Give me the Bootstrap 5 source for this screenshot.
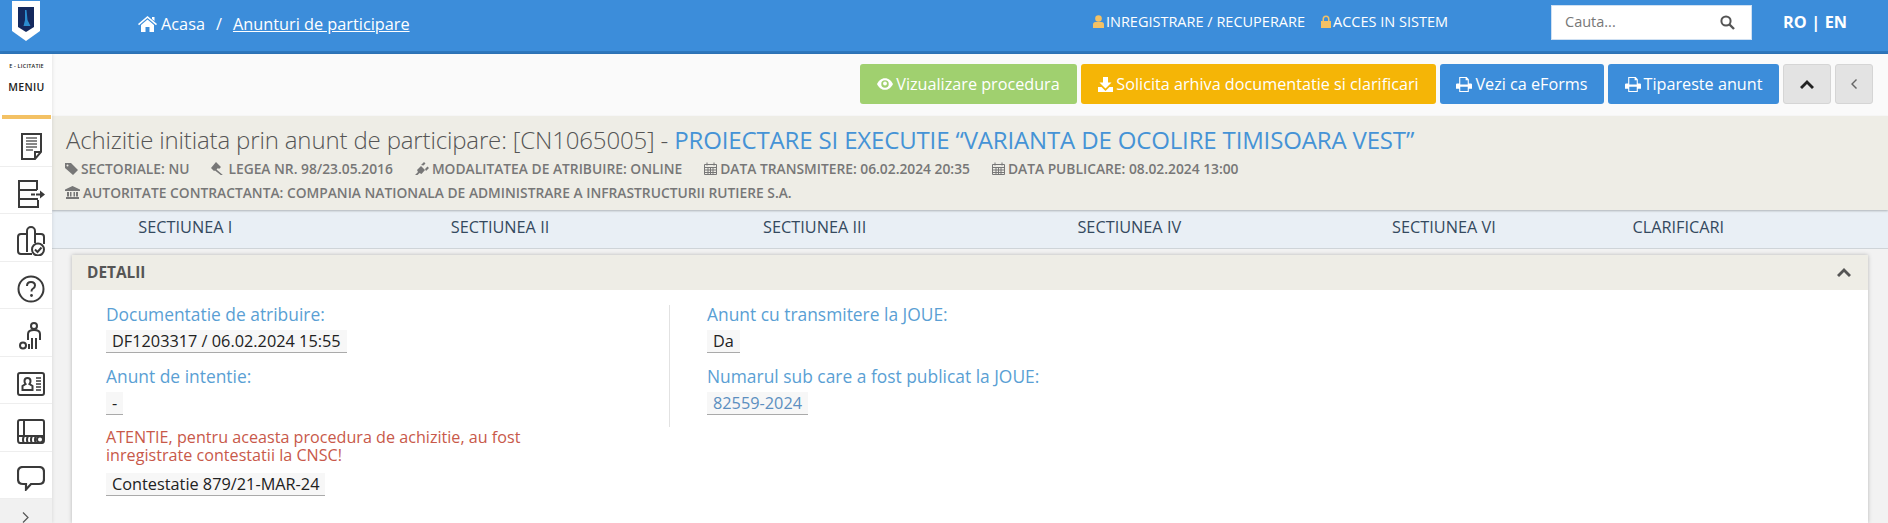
<!DOCTYPE html>
<html lang="ro">
<head>
<meta charset="utf-8">
<title>Anunturi de participare</title>
<link rel="stylesheet" href="https://cdn.jsdelivr.net/npm/bootstrap@5.3.0/dist/css/bootstrap.min.css">
<style>
html,body{height:523px;overflow:hidden}
body{font-family:"Open Sans",sans-serif;background:#fff;color:#333;width:1888px}
svg{fill:currentColor;flex:none}
.topbar{height:54px;background:#3c8dda;border-bottom:3px solid #2e77bd;color:#fff;padding-bottom:7px}
.logo-slot{width:52px;padding-left:12px}
.crumbs{margin-left:86px;margin-top:4px;font-size:16.3px;gap:7px}
.crumbs a{color:#fff}
.auth-links{font-size:14.5px;margin-right:103px;margin-bottom:1px;gap:16px;color:#fff}
.auth-links svg{color:#f3c164;margin-right:2px}
.search-box{width:201px;height:35px;background:#fff;padding:0 16px 0 13px;font-size:14.5px;color:#777;margin-right:31px;border:1px solid #cfe0f2}
.lang{font-size:16.3px;font-weight:700;color:#fff;width:105px;letter-spacing:.1px}
.main-row{height:469px}
.side-col{width:52px;background:#fff;z-index:2;box-shadow:1px 0 3px rgba(0,0,0,.08)}
.side-head{height:65px;text-align:center;color:#222;border-bottom:4px solid #f3c164;margin:0 1px 0 2px}
.side-head .brand{font-size:5.5px;font-weight:600;padding-top:6px;line-height:12px;letter-spacing:.2px}
.side-head .menu{font-size:10.5px;font-weight:600;line-height:16px;margin-top:7px;letter-spacing:.3px}
.side-item{height:47.5px;border-bottom:1px solid #eee;color:#3a3a3a;padding-top:8px;padding-left:9px}
.side-item svg{fill:none;stroke:#3a3a3a;stroke-width:2}
.side-more{height:24px;background:#f1f1f1;color:#555;padding:13px 2px 0 0}
.content-col{min-width:0;background:#f2f2f2}
.toolbar{height:62px;background:#fafafa;padding:10px 15px 0 0;gap:4px;box-shadow:0 1px 3px rgba(0,0,0,.25);position:relative}
.tool-btn{height:40px;font-size:16.2px;color:#fff;border:0;border-radius:3px;padding:0;gap:3px}
.w-viz{width:217px;background:#a0d06f}
.w-sol{width:355px;background:#f5b506}
.w-efo{width:164px;background:#3c8dda}
.w-tip{width:171px;background:#3c8dda}
.w-up{width:48px;background:#e3e3e3;color:#222;border:1px solid #d5d5d5}
.w-left{width:38px;background:#e3e3e3;color:#666;border:1px solid #d5d5d5}
.titlestrip{height:94px;background:#eeede6;padding:8px 0 0 14px;box-shadow:0 1px 2px rgba(0,0,0,.25);position:relative}
.proc-title{font-size:24px;font-weight:300;color:#555;line-height:31px;margin:0 0 2px;white-space:nowrap;letter-spacing:-.15px}
.proc-title span{color:#4593d6;font-weight:400}
.meta-row{font-size:13.8px;font-weight:600;color:#777;line-height:24px;gap:22px;white-space:nowrap;margin-left:-1px}
.meta-row svg{margin-right:3px;vertical-align:-1px}
.tabs-strip{height:39px;background:#e9eff5;border-bottom:1px solid #cfd4d8;overflow:hidden}
.tabs-row{margin-left:-24px;width:1900px}
.tab-cell{width:314.67px;text-align:center;font-size:16.3px;font-weight:500;color:#34495e;line-height:34px}
.tab-last{width:154px}
.panel-box{margin:6px 20px 0;background:#fff;box-shadow:0 0 4px rgba(0,0,0,.25);height:268px}
.panel-head{height:35px;background:#eeede6;padding:0 17px 0 15px;font-size:15.4px;font-weight:700;color:#555}
.panel-body-area{padding:15px 0 0 34px}
.left-pane{width:563px;padding-right:110px}
.right-pane{padding-left:37px;border-left:1px solid #e2e2e2;height:122px}
.fld-label{font-size:17.4px;color:#5a9fd4;line-height:18px;margin:0 0 7px}
.fld-alert{color:#c8594a;font-size:16.15px;margin-top:-1px;margin-bottom:9px}
.fld-value{display:table;font-size:16.3px;line-height:22px;background:#f7f7f7;border-bottom:1px solid #aaa;padding:0 6px;color:#222;margin-bottom:14px}
.fld-link{color:#5c8fc0}
</style>
</head>
<body>
<div class="topbar d-flex align-items-center">
  <div class="logo-slot align-self-start">
    <svg width="28" height="41" viewBox="0 0 28 41"><path fill="#fff" d="M0 1h28v30L14 41 0 31z"/><path fill="#14295e" d="M6 7h16v20l-8 5-8-5z"/><path fill="#2b8ccf" d="M13 10h1.500l1 10 3 6h-7l1.500-6z"/></svg>
  </div>
  <nav class="crumbs d-flex align-items-center">
    <span class="d-flex align-items-center gap-1"><svg width="19" height="16" viewBox="0 0 19 16"><path d="M9.500 0l9.500 8-1 1.200-8.500-7.100L1 9.200 0 8z"/><path d="M3 9l6.500-5.400L16 9v7h-4.500v-5h-4v5H3zM14 1h2.500v4L14 3z"/></svg><span>Acasa</span></span>
    <span class="mx-1">/</span>
    <a href="#">Anunturi de participare</a>
  </nav>
  <div class="auth-links d-flex align-items-center ms-auto">
    <span class="d-flex align-items-center"><svg width="11" height="13" viewBox="0 0 11 13"><circle cx="5.500" cy="3.500" r="3.300"/><path d="M0 13V9.500Q0 7 2.500 7h6Q11 7 11 9.500V13z"/></svg>INREGISTRARE / RECUPERARE</span>
    <span class="d-flex align-items-center"><svg width="10" height="13" viewBox="0 0 10 13"><path d="M0 6h1.500V4a3.500 3.500 0 017 0v2H10v7H0zM3 6h4V4a2 2 0 00-4 0z"/></svg>ACCES IN SISTEM</span>
  </div>
  <div class="search-box d-flex align-items-center justify-content-between">
    <span>Cauta...</span>
    <svg width="15" height="15" viewBox="0 0 15 15" style="fill:none"><circle cx="6" cy="6" r="4.600" stroke="#555" stroke-width="2"/><path d="M9.500 9.500l4.500 4.500" stroke="#555" stroke-width="2.400"/></svg>
  </div>
  <div class="lang">RO | EN</div>
</div>
<div class="main-row d-flex">
  <aside class="side-col flex-shrink-0">
    <div class="side-head">
      <div class="brand">E - LICITATIE</div>
      <div class="menu">MENIU</div>
    </div>
    <div class="side-item d-flex align-items-center justify-content-center"><svg width="22" height="28" viewBox="0 0 22 28"><path d="M3 2h18v18l-6 7H2V2z"/><path d="M15 27v-7h6" /><path d="M6 6h11M6 9h11M6 12h11M6 15h11M6 18h7" stroke="#888"/></svg></div>
    <div class="side-item d-flex align-items-center justify-content-center"><svg width="28" height="28" viewBox="0 0 28 28"><path d="M20 10V1H2v26h19v-7M2 10h18M2 19h19"/><path d="M14 14.500h9" stroke-dasharray="4 1"/><path fill="#3a3a3a" stroke="none" d="M23 10.500l5 4-5 4z"/></svg></div>
    <div class="side-item d-flex align-items-center justify-content-center"><svg width="28" height="30" viewBox="0 0 28 30"><path d="M10 8H4Q1 8 1 11v14q0 3 3 3h11"/><path d="M10 26V5a4 4 0 018 0v12"/><path d="M18 8h6q3 0 3 3v7"/><circle cx="21" cy="23.500" r="6" fill="#fff"/><path d="M18 23.500l2.500 2.500 4-4.500"/></svg></div>
    <div class="side-item d-flex align-items-center justify-content-center"><svg width="28" height="28" viewBox="0 0 28 28"><circle cx="14" cy="14" r="12.500"/><path d="M10 11q0-4 4-4t4 3.500q0 2-2.500 3.500-1 .7-1 2.500"/><circle cx="14.500" cy="20.500" r="1.400" fill="#3a3a3a" stroke="none"/></svg></div>
    <div class="side-item d-flex align-items-center justify-content-center"><svg width="24" height="28" viewBox="0 0 24 28"><circle cx="15" cy="4" r="3"/><path d="M9 18v-6q0-4 6-4t6 4v6"/><path d="M13 27V16M17 27V16" /><path d="M10 27v-5" /><circle cx="4" cy="23.500" r="3"/></svg></div>
    <div class="side-item d-flex align-items-center justify-content-center"><svg width="28" height="24" viewBox="0 0 28 24"><rect x="1" y="1" width="26" height="22" rx="2"/><path d="M7.500 9a3 3 0 016 0q0 2-1 3l3 2v4h-10v-4l3-2q-1-1-1-3z"/><path d="M19 6h5M19 9h5M19 12h5M19 15h5M19 18h5" stroke-width="1.600"/></svg></div>
    <div class="side-item d-flex align-items-center justify-content-center"><svg width="28" height="25" viewBox="0 0 28 25"><path d="M3 1h22q2 0 2 2v18q0 3-2 3H3q-2 0-2-3V3q0-2 2-2z"/><path d="M7 1v16M1 17h26"/><path d="M7 24q-2-3 0-7M11 24q-2-3 0-7M15 24q-2-3 0-7M19 24q-2-3 0-7"/><circle cx="23" cy="20.500" r="3"/></svg></div>
    <div class="side-item d-flex align-items-center justify-content-center"><svg width="28" height="25" viewBox="0 0 28 25" style="stroke-width:2.200"><path d="M6 1h16q5 0 5 5v7q0 5-5 5h-8l-5 5.500v-5.500H6q-5 0-5-5V6q0-5 5-5z"/></svg></div>
    <div class="side-more d-flex justify-content-center"><svg width="7" height="11" viewBox="0 0 7 11" style="fill:none;stroke:#555;stroke-width:1.200"><path d="M1 .5l5 5-5 5"/></svg></div>
  </aside>
  <main class="content-col flex-grow-1">
    <div class="toolbar d-flex justify-content-end">
      <button class="tool-btn w-viz d-flex align-items-center justify-content-center"><svg width="16" height="12" viewBox="0 0 15 11"><path fill-rule="evenodd" d="M7.500 0C11 0 13.500 2.500 15 5.500 13.500 8.500 11 11 7.500 11S1.500 8.500 0 5.500C1.500 2.500 4 0 7.500 0zm0 2a3.500 3.500 0 100 7 3.500 3.500 0 000-7z"/><circle cx="7.500" cy="5" r="1.800"/></svg>Vizualizare procedura</button>
      <button class="tool-btn w-sol d-flex align-items-center justify-content-center"><svg width="15" height="15" viewBox="0 0 15 15"><path d="M5 0h5v5.500h3.500L7.500 11.500 1.500 5.500H5z"/><path d="M0 10h3.500l4 4 4-4H15v5H0z"/></svg>Solicita arhiva documentatie si clarificari</button>
      <button class="tool-btn w-efo d-flex align-items-center justify-content-center"><svg width="16" height="15" viewBox="0 0 15 14"><path fill-rule="evenodd" d="M3 0h7l2 2v4h2a1 1 0 011 1v4h-3v3H3v-3H0V7a1 1 0 011-1h2zm1 1v6h7V3H9V1zm0 8v4h7V9z"/></svg>Vezi ca eForms</button>
      <button class="tool-btn w-tip d-flex align-items-center justify-content-center"><svg width="16" height="15" viewBox="0 0 15 14"><path fill-rule="evenodd" d="M3 0h7l2 2v4h2a1 1 0 011 1v4h-3v3H3v-3H0V7a1 1 0 011-1h2zm1 1v6h7V3H9V1zm0 8v4h7V9z"/></svg>Tipareste anunt</button>
      <button class="tool-btn w-up d-flex align-items-center justify-content-center"><svg width="14" height="9" viewBox="0 0 14 9"><path d="M7 0l7 7-2 2-5-5-5 5-2-2z"/></svg></button>
      <button class="tool-btn w-left d-flex align-items-center justify-content-center"><svg width="6" height="10" viewBox="0 0 6 10"><path d="M5 0l1 1-4 4 4 4-1 1-5-5z"/></svg></button>
    </div>
    <section class="titlestrip">
      <h1 class="proc-title">Achizitie initiata prin anunt de participare: [CN1065005] - <span>PROIECTARE SI EXECUTIE “VARIANTA DE OCOLIRE TIMISOARA VEST”</span></h1>
      <div class="meta-row d-flex">
        <span><svg width="13" height="12" viewBox="0 0 13 12"><path d="M0 0h6l7 7-5 5-8-7zM2.500 1.500a1 1 0 100 2 1 1 0 000-2z"/></svg>SECTORIALE: NU</span>
        <span><svg width="14" height="13" viewBox="0 0 14 13"><path d="M5 0l5 5-2 2-1-1-1.500 1.500L13 14h-2L4 8.500 3 9 0 6z" /></svg>LEGEA NR. 98/23.05.2016</span>
        <span><svg width="14" height="13" viewBox="0 0 14 13"><path d="M0 13l3-3-1-2 4-4 4 4-3.500 4-2-1-3 3zM6 3l3-3 1.500 1.500-2 2zM10 7l2.500-2.500L14 6l-3 3z"/></svg>MODALITATEA DE ATRIBUIRE: ONLINE</span>
        <span><svg width="13" height="13" viewBox="0 0 13 13" style="fill:none;stroke:#777"><path d="M.5 2.500h12v10H.5zM.5 5.500h12M3 .5v3M10 .5v3M4 5.500v7M6.500 5.500v7M9 5.500v7M.5 8h12M.5 10.500h12"/></svg>DATA TRANSMITERE: 06.02.2024 20:35</span>
        <span><svg width="13" height="13" viewBox="0 0 13 13" style="fill:none;stroke:#777"><path d="M.5 2.500h12v10H.5zM.5 5.500h12M3 .5v3M10 .5v3M4 5.500v7M6.500 5.500v7M9 5.500v7M.5 8h12M.5 10.500h12"/></svg>DATA PUBLICARE: 08.02.2024 13:00</span>
      </div>
      <div class="meta-row">
        <span><svg width="15" height="13" viewBox="0 0 15 13"><path d="M7.500 0L15 3.500V5H0V3.500zM2 6h2v4.500H2zM5 6h1.500v4.500H5zM8.500 6H10v4.500H8.500zM11 6h2v4.500h-2zM1 11h13v2H1z"/></svg>AUTORITATE CONTRACTANTA: COMPANIA NATIONALA DE ADMINISTRARE A INFRASTRUCTURII RUTIERE S.A.</span>
      </div>
    </section>
    <div class="tabs-strip">
      <div class="tabs-row d-flex">
        <div class="tab-cell">SECTIUNEA I</div>
        <div class="tab-cell">SECTIUNEA II</div>
        <div class="tab-cell">SECTIUNEA III</div>
        <div class="tab-cell">SECTIUNEA IV</div>
        <div class="tab-cell">SECTIUNEA VI</div>
        <div class="tab-cell tab-last">CLARIFICARI</div>
      </div>
    </div>
    <section class="panel-box">
      <div class="panel-head d-flex align-items-center justify-content-between">
        <span>DETALII</span>
        <svg width="14" height="9" viewBox="0 0 14 9"><path d="M7 0l7 7-2 2-5-5-5 5-2-2z"/></svg>
      </div>
      <div class="panel-body-area d-flex">
        <div class="left-pane">
          <p class="fld-label">Documentatie de atribuire:</p>
          <div class="fld-value">DF1203317 / 06.02.2024 15:55</div>
          <p class="fld-label">Anunt de intentie:</p>
          <div class="fld-value">-</div>
          <p class="fld-label fld-alert">ATENTIE, pentru aceasta procedura de achizitie, au fost inregistrate contestatii la CNSC!</p>
          <div class="fld-value">Contestatie 879/21-MAR-24</div>
        </div>
        <div class="right-pane">
          <p class="fld-label">Anunt cu transmitere la JOUE:</p>
          <div class="fld-value">Da</div>
          <p class="fld-label">Numarul sub care a fost publicat la JOUE:</p>
          <div class="fld-value fld-link">82559-2024</div>
        </div>
      </div>
    </section>
  </main>
</div>
<script src="https://cdn.jsdelivr.net/npm/bootstrap@5.3.0/dist/js/bootstrap.bundle.min.js"></script>
</body>
</html>
